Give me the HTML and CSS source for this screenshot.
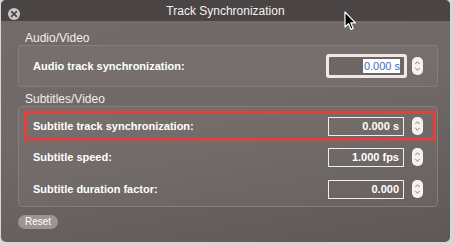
FILE: index.html
```html
<!DOCTYPE html>
<html lang="en">
<head>
    <meta charset="UTF-8">
    <title>Track Synchronization</title>
    <link rel="stylesheet" href="styles.css">
</head>
<body>
    <div class="window">
        <div class="titlebar">
            <span class="close">
                <svg width="12" height="12" viewBox="0 0 12 12">
                    <circle cx="6" cy="6" r="6" fill="#cbc7c7"/>
                    <path d="M3.6 3.6 L8.4 8.4 M8.4 3.6 L3.6 8.4" stroke="#4c4646" stroke-width="1.7" stroke-linecap="round"/>
                </svg>
            </span>
            <span class="title">Track Synchronization</span>
        </div>

        <div class="content">
            <div class="section-label">Audio/Video</div>
            <div class="group group-audio">
                <div class="row">
                    <span class="label">Audio track synchronization:</span>
                    <span class="field focused"><span class="selected">0.000 s</span></span>
                    <span class="stepper">
                        <svg width="11" height="18" viewBox="0 0 11 18">
                            <rect x="0" y="0" width="11" height="18" rx="5" fill="#f5f1f1"/>
                            <path d="M3.3 7 L5.5 4.8 L7.7 7 M3.3 11 L5.5 13.2 L7.7 11" fill="none" stroke="#857c7c" stroke-width="1"/>
                        </svg>
                    </span>
                </div>
            </div>

            <div class="section-label">Subtitles/Video</div>
            <div class="group group-subs">
                <div class="row highlighted">
                    <span class="label">Subtitle track synchronization:</span>
                    <span class="field">0.000 s</span>
                    <span class="stepper">
                        <svg width="11" height="18" viewBox="0 0 11 18">
                            <rect x="0" y="0" width="11" height="18" rx="5" fill="#f5f1f1"/>
                            <path d="M3.3 7 L5.5 4.8 L7.7 7 M3.3 11 L5.5 13.2 L7.7 11" fill="none" stroke="#857c7c" stroke-width="1"/>
                        </svg>
                    </span>
                </div>
                <div class="row">
                    <span class="label">Subtitle speed:</span>
                    <span class="field">1.000 fps</span>
                    <span class="stepper">
                        <svg width="11" height="18" viewBox="0 0 11 18">
                            <rect x="0" y="0" width="11" height="18" rx="5" fill="#f5f1f1"/>
                            <path d="M3.3 7 L5.5 4.8 L7.7 7 M3.3 11 L5.5 13.2 L7.7 11" fill="none" stroke="#857c7c" stroke-width="1"/>
                        </svg>
                    </span>
                </div>
                <div class="row">
                    <span class="label">Subtitle duration factor:</span>
                    <span class="field">0.000</span>
                    <span class="stepper">
                        <svg width="11" height="18" viewBox="0 0 11 18">
                            <rect x="0" y="0" width="11" height="18" rx="5" fill="#f5f1f1"/>
                            <path d="M3.3 7 L5.5 4.8 L7.7 7 M3.3 11 L5.5 13.2 L7.7 11" fill="none" stroke="#857c7c" stroke-width="1"/>
                        </svg>
                    </span>
                </div>
            </div>

            <button class="reset" type="button">Reset</button>
        </div>

        <svg class="cursor" width="13" height="20" viewBox="0 0 13 20">
            <path d="M1 1 L1 16 L4.5 12.6 L7 18.4 L9.2 17.4 L6.8 11.8 L11.5 11.8 Z" fill="#000" stroke="#fff" stroke-width="1.2" stroke-linejoin="round"/>
        </svg>
    </div>
</body>
</html>
```

FILE: styles.css
```css
body {
    margin: 0;
    background: #d7d6d6;
    font-family: 'Liberation Sans', Arial, sans-serif;
}

.window {
    position: relative;
    width: 449px;
    height: 242px;
    margin-left: 1px;
    border-radius: 5px;
    overflow: hidden;
    background: linear-gradient(170deg, #736b69 0%, #716967 45%, #5e5857 100%);
}

.titlebar {
    height: 21px;
    background: #4a4444;
    display: flex;
    align-items: center;
    justify-content: center;
    position: relative;
}

.close {
    position: absolute;
    left: 7px;
    top: 6px;
    width: 12px;
    height: 12px;
}

.title {
    color: #f4f2f2;
    font-size: 12px;
    padding-top: 1px;
}

.content {
    padding: 10px 12px 0 17px;
}

.section-label {
    color: #f2eeee;
    font-size: 12px;
    line-height: 14px;
    padding-left: 7px;
}

.group {
    border: 1px solid #857d7a;
    border-radius: 4px;
    background: rgba(255, 255, 255, 0.04);
}

.group-audio {
    margin-bottom: 5px;
}

.group-audio .row {
    height: 40px;
}

.group-subs {
    padding: 4px 0 1px 0;
}

.row {
    height: 32px;
    display: flex;
    align-items: center;
    padding: 0 14px 0 14px;
}

.row.highlighted {
    height: 30px;
    margin: 0 1px 0 5px;
    padding: 0 13px 0 9px;
    box-sizing: border-box;
    outline: 3px solid #e0413d;
    outline-offset: -3px;
}

.label {
    flex: 1;
    color: #ffffff;
    font-size: 11px;
    font-weight: bold;
}

.field {
    width: 76px;
    height: 19px;
    box-sizing: border-box;
    border: 1px solid #f1eded;
    color: #ffffff;
    font-size: 11px;
    font-weight: bold;
    text-align: right;
    line-height: 17px;
    padding-right: 4px;
}

.field.focused {
    border: none;
    background: #6e6664;
    box-shadow: 0 0 0 3px #f0e8e8;
    border-radius: 1px;
    width: 75px;
    height: 18px;
    line-height: 18px;
    padding-right: 4px;
    font-weight: normal;
}

.selected {
    background: #ffffff;
    color: #3b6cc2;
    padding: 1px 0 1px 1px;
}

.stepper {
    margin-left: 8px;
    width: 11px;
    height: 18px;
    display: flex;
}

.reset {
    margin-top: 8px;
    width: 40px;
    height: 14px;
    border: none;
    border-radius: 7px;
    background: #9c9392;
    color: #ffffff;
    font-family: 'Liberation Sans', Arial, sans-serif;
    font-size: 10px;
    padding: 0;
    line-height: 14px;
    display: block;
}

.cursor {
    position: absolute;
    left: 343px;
    top: 11px;
}
```
